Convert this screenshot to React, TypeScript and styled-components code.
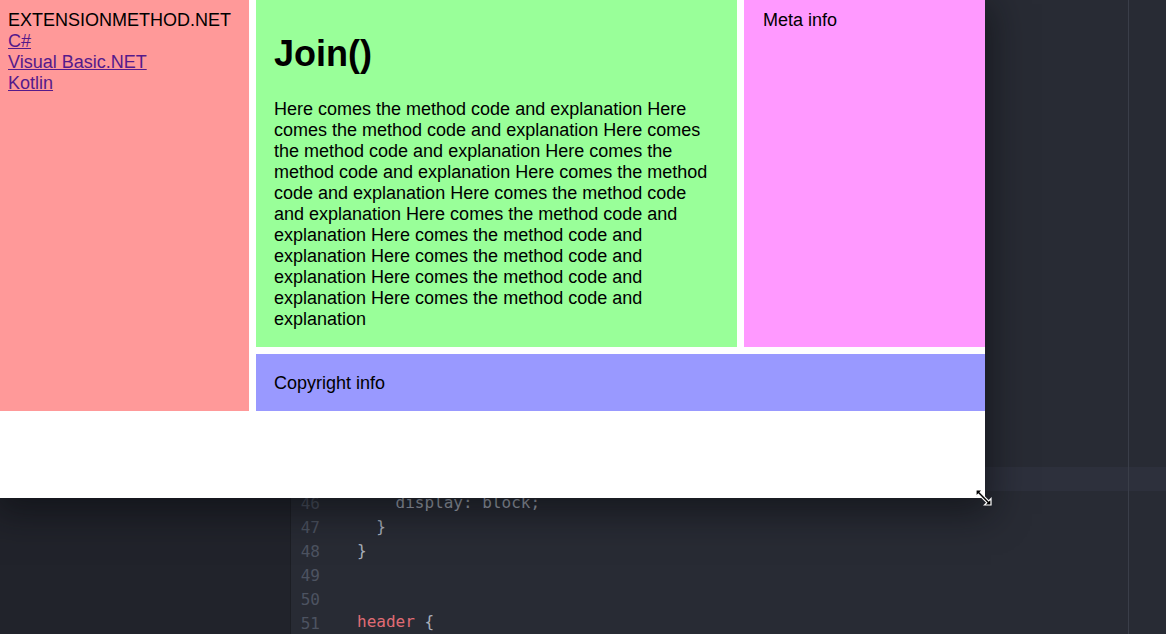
import React from "react";
import styled, { createGlobalStyle } from "styled-components";

const Global = createGlobalStyle`
  html, body {
    margin: 0;
    padding: 0;
    background: #282b34;
    overflow: hidden;
  }
  body {
    font-family: "Liberation Sans", Arial, Helvetica, sans-serif;
  }
`;

const Desktop = styled.div`
  position: relative;
  width: 1166px;
  height: 634px;
  display: flex;
  overflow: hidden;
  background: #282b34;
`;

const TreePane = styled.div`
  width: 291px;
  flex: none;
  background: #21232b;
  border-right: 1px solid #1c1e24;
  box-sizing: border-box;
`;

const Editor = styled.div`
  position: relative;
  flex: 1;
  display: flex;
  font-family: "DejaVu Sans Mono", "Liberation Mono", monospace;
  font-size: 16px;
  line-height: 24px;
  padding-top: 12px;
`;

const Gutter = styled.div`
  width: 40px;
  flex: none;
  display: flex;
  flex-direction: column;
`;

const LineNo = styled.div<{ $active?: boolean }>`
  height: 24px;
  text-align: right;
  padding-right: 11px;
  color: ${(p) => (p.$active ? "#7a818e" : "#4d5361")};
  background: ${(p) => (p.$active ? "#2d303c" : "transparent")};
`;

const Code = styled.div`
  position: relative;
  flex: 1;
  display: flex;
  flex-direction: column;
`;

const CodeLine = styled.div<{ $active?: boolean }>`
  height: 24px;
  padding-left: 26px;
  white-space: pre;
  color: #a9afbb;
  background: ${(p) => (p.$active ? "#2d303c" : "transparent")};
`;

const Sel = styled.span`
  color: #e06c75;
`;
const Prop = styled.span`
  color: #a9afbb;
`;
const Val = styled.span`
  color: #d19a66;
`;

const WrapGuide = styled.div`
  position: absolute;
  top: -12px;
  bottom: 0;
  left: calc(26px + 80ch);
  width: 1px;
  background: #3a3e49;
`;

const BrowserWindow = styled.div`
  position: absolute;
  left: 0;
  top: 0;
  width: 985px;
  height: 498px;
  background: #ffffff;
  box-shadow: 0 10px 34px 6px rgba(10, 11, 14, 0.55);
  font-size: 18px;
  line-height: 21px;
  color: #000;
`;

const PageGrid = styled.div`
  display: grid;
  grid-template-columns: 249px 481px 241px;
  grid-template-rows: auto auto;
  gap: 7px;
`;

const Sidebar = styled.nav`
  grid-row: 1 / span 2;
  background: #ff9999;
  padding: 10px 8px;
  display: flex;
  flex-direction: column;
`;

const Brand = styled.div``;

const NavLink = styled.a`
  color: #551a8b;
  text-decoration: underline;
  width: fit-content;
`;

const Main = styled.main`
  background: #99ff99;
  padding: 9px 18px 17px;
`;

const Title = styled.h1`
  margin: 24px 0 25px;
  font-size: 36px;
  line-height: 41px;
  font-weight: bold;
`;

const Body = styled.p`
  margin: 0;
`;

const Meta = styled.aside`
  background: #ff99ff;
  padding: 10px 19px;
`;

const Footer = styled.footer`
  grid-column: 2 / span 2;
  background: #9999ff;
  padding: 19px 18px 17px;
`;

const Cursor = styled.svg`
  position: absolute;
  left: 975px;
  top: 489px;
`;

const text = Array(11)
  .fill("Here comes the method code and explanation")
  .join(" ");

type L = { n: number; content: React.ReactNode };

const lines: L[] = [
  { n: 26, content: <><Sel>.wrapper</Sel> {"{"}</> },
  { n: 27, content: <>  <Prop>display</Prop>: <Val>grid</Val>;</> },
  { n: 28, content: <>  <Prop>grid-gap</Prop>: <Val>7px</Val>;</> },
  { n: 29, content: <>{"}"}</> },
  { n: 30, content: "" },
  { n: 31, content: <><Sel>.wrapper</Sel> {"> * {"}</> },
  { n: 32, content: <>  <Prop>padding</Prop>: <Val>1em</Val>;</> },
  { n: 33, content: <>{"}"}</> },
  { n: 34, content: "" },
  { n: 35, content: <><Sel>nav</Sel> {"{"}</> },
  { n: 36, content: <>  <Prop>background</Prop>: <Val>#f99</Val>;</> },
  { n: 37, content: <>{"}"}</> },
  { n: 38, content: "" },
  { n: 39, content: <><Sel>nav</Sel> {"{"}</> },
  { n: 40, content: <>  <Sel>ul</Sel> {"{"}</> },
  { n: 41, content: <>    <Prop>list-style</Prop>: <Val>none</Val>;</> },
  { n: 42, content: <>    <Prop>margin</Prop>: <Val>0</Val>;</> },
  { n: 43, content: <>  {"}"}</> },
  { n: 44, content: <>  <Sel>a</Sel> {"{"}</> },
  { n: 45, content: <>    <Prop>padding</Prop>: <Val>0</Val>;</> },
  { n: 46, content: <>    display: block;</> },
  { n: 47, content: <>  {"}"}</> },
  { n: 48, content: <>{"}"}</> },
  { n: 49, content: "" },
  { n: 50, content: "" },
  { n: 51, content: <><Sel>header</Sel> {"{"}</> },
];

const ACTIVE = 45;

export default function App() {
  return (
    <>
      <Global />
      <Desktop>
        <TreePane />
        <Editor>
          <Gutter>
            {lines.map((l) => (
              <LineNo key={l.n} $active={l.n === ACTIVE}>
                {l.n}
              </LineNo>
            ))}
          </Gutter>
          <Code>
            {lines.map((l) => (
              <CodeLine key={l.n} $active={l.n === ACTIVE}>
                {l.content}
              </CodeLine>
            ))}
            <WrapGuide />
          </Code>
        </Editor>
        <BrowserWindow>
          <PageGrid>
            <Sidebar>
              <Brand>EXTENSIONMETHOD.NET</Brand>
              <NavLink href="#csharp">C#</NavLink>
              <NavLink href="#vb">Visual Basic.NET</NavLink>
              <NavLink href="#kotlin">Kotlin</NavLink>
            </Sidebar>
            <Main>
              <Title>Join()</Title>
              <Body>{text}</Body>
            </Main>
            <Meta>Meta info</Meta>
            <Footer>Copyright info</Footer>
          </PageGrid>
        </BrowserWindow>
        <Cursor width="17" height="17" viewBox="0 0 17 17">
          <path
            d="M1 1 L7.5 1 L5.2 3.3 L13.7 11.8 L16 9.5 L16 16 L9.5 16 L11.8 13.7 L3.3 5.2 L1 7.5 Z"
            fill="#000"
            stroke="#fff"
            strokeWidth="1.2"
            strokeLinejoin="miter"
          />
        </Cursor>
      </Desktop>
    </>
  );
}
